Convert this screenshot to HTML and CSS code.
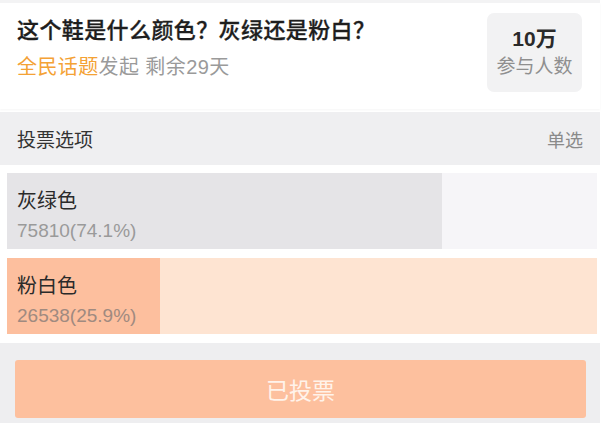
FILE: index.html
```html
<!DOCTYPE html>
<html lang="zh-CN">
<head>
<meta charset="utf-8">
<link rel="stylesheet" href="styles.css">
</head>
<body>
<div class="page">
  <div class="topstrip"></div>
  <div class="card">
    <div class="info">
      <div class="title">这个鞋是什么颜色？灰绿还是粉白？</div>
      <div class="sub"><span class="topic">全民话题</span>发起 剩余29天</div>
    </div>
    <div class="count">
      <div class="num">10万</div>
      <div class="label">参与人数</div>
    </div>
  </div>
  <div class="head">
    <span class="head-title">投票选项</span>
    <span class="head-type">单选</span>
  </div>
  <div class="options">
    <div class="opt opt-gray">
      <div class="fill" style="width:73.8%"></div>
      <div class="opt-text">
        <div class="opt-name">灰绿色</div>
        <div class="opt-val">75810(74.1%)</div>
      </div>
    </div>
    <div class="opt opt-pink">
      <div class="fill" style="width:25.9%"></div>
      <div class="opt-text">
        <div class="opt-name">粉白色</div>
        <div class="opt-val">26538(25.9%)</div>
      </div>
    </div>
  </div>
  <div class="footer">
    <div class="btn">已投票</div>
  </div>
</div>
</body>
</html>
```
FILE: styles.css
```css
html, body {
  margin: 0;
  padding: 0;
  background: #ffffff;
}
body {
  font-family: "Liberation Sans", "Noto Sans CJK SC", sans-serif;
  width: 614px;
  height: 424px;
  overflow: hidden;
}
.page {
  width: 600px;
}
.topstrip {
  height: 3px;
  background: #f3f3f4;
}
.card {
  height: 106px;
  display: flex;
  align-items: flex-start;
  justify-content: space-between;
  padding: 0 18px 0 17px;
  box-shadow: 0 1px 2px rgba(0,0,0,0.04);
  position: relative;
}
.info {
  padding-top: 14px;
}
.title {
  font-size: 22px;
  line-height: 28px;
  font-weight: 500;
  letter-spacing: 0.4px;
  color: #1e1e1e;
  -webkit-text-stroke: 0.3px #1e1e1e;
}
.sub {
  margin-top: 9px;
  font-size: 20px;
  line-height: 26px;
  letter-spacing: 0.4px;
  color: #9a9a9a;
}
.topic {
  color: #f4a235;
}
.count {
  margin-top: 10px;
  width: 95px;
  height: 79px;
  border-radius: 7px;
  background: #f2f2f3;
  display: flex;
  flex-direction: column;
  align-items: center;
  justify-content: center;
}
.num {
  font-size: 21px;
  line-height: 26px;
  font-weight: 700;
  color: #2a2a2a;
}
.label {
  margin-top: 3px;
  font-size: 19px;
  line-height: 24px;
  color: #8f8f8f;
}
.head {
  height: 53px;
  background: #efeff1;
  display: flex;
  align-items: center;
  justify-content: space-between;
  padding: 0 17px 0 17px;
  margin-top: 3px;
}
.head-title {
  font-size: 19px;
  color: #333;
}
.head-type {
  font-size: 18px;
  color: #8a8a8a;
}
.options {
  padding: 8px 3px 9px 7px;
  display: flex;
  flex-direction: column;
  gap: 9px;
}
.opt {
  position: relative;
  height: 76px;
}
.opt-gray { background: #f6f5f8; }
.opt-gray .fill { background: #e5e4e7; }
.opt-pink { background: #fee4d2; }
.opt-pink .fill { background: #fdbf9e; }
.fill {
  position: absolute;
  left: 0;
  top: 0;
  bottom: 0;
}
.opt-text {
  position: relative;
  padding: 15px 0 0 10px;
}
.opt-name {
  font-size: 20px;
  line-height: 26px;
  color: #2a2a2a;
}
.opt-val {
  margin-top: 4px;
  font-size: 19px;
  line-height: 26px;
  color: #9a9a9a;
}
.opt-pink .opt-val { color: #a08a80; }
.footer {
  background: #eeeef0;
  height: 80px;
  padding: 17px 14px 0 15px;
  box-sizing: border-box;
}
.btn {
  height: 58px;
  border-radius: 3px;
  background: #fdc09e;
  color: #fff3ea;
  font-size: 23px;
  display: flex;
  align-items: center;
  justify-content: center;
}
```
